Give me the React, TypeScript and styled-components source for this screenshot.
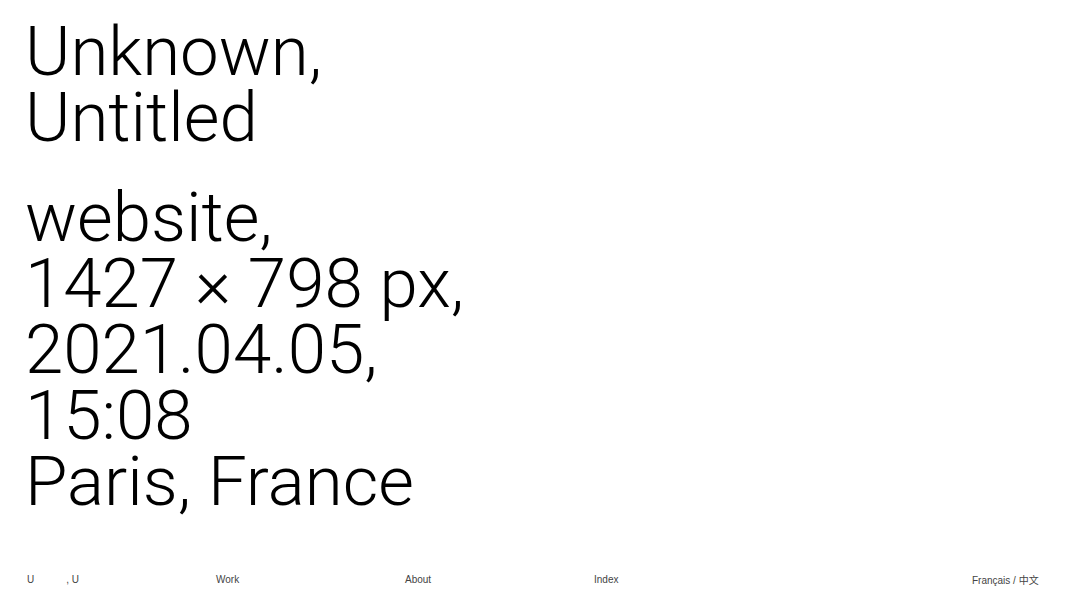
import React from "react";
import styled, { createGlobalStyle } from "styled-components";

const Global = createGlobalStyle`
  html, body { margin: 0; padding: 0; background: #fff; }
  body { font-family: "Liberation Sans", Arial, sans-serif; color: #000; }
`;

const Page = styled.div`
  min-height: 100vh;
  box-sizing: border-box;
  display: flex;
  flex-direction: column;
  padding: 19px 25px 23px 25px;
`;

const Block = styled.div<{ $gap?: number }>`
  font-family: Roboto, "Liberation Sans", sans-serif;
  font-size: 69px;
  line-height: 66px;
  letter-spacing: 0;
  font-weight: 300;
  color: #000;
  margin-top: ${(p) => p.$gap ?? 0}px;
`;

const Line = styled.div`
  white-space: nowrap;
`;

const Footer = styled.footer`
  margin-top: auto;
  display: grid;
  grid-template-columns: repeat(5, 189px) auto;
  font-size: 10px;
  line-height: 12px;
  color: #444;
  padding-left: 2px;
`;

const Item = styled.span`
  white-space: nowrap;
`;

const Hidden = styled.span`
  visibility: hidden;
  letter-spacing: -0.4px;
`;

const Cjk = styled.span`
  font-family: "Noto Sans CJK SC", sans-serif;
`;

export default function App() {
  return (
    <>
      <Global />
      <Page>
        <Block>
          <Line>Unknown,</Line>
          <Line>Untitled</Line>
        </Block>
        <Block $gap={34}>
          <Line>website,</Line>
          <Line>1427 × 798 px,</Line>
          <Line>2021.04.05,</Line>
          <Line>15:08</Line>
          <Line>Paris, France</Line>
        </Block>
        <Footer>
          <Item>
            U<Hidden>nknown</Hidden>, U<Hidden>ntitled</Hidden>
          </Item>
          <Item>Work</Item>
          <Item>About</Item>
          <Item>Index</Item>
          <Item />
          <Item>
            Français / <Cjk>中文</Cjk>
          </Item>
        </Footer>
      </Page>
    </>
  );
}
